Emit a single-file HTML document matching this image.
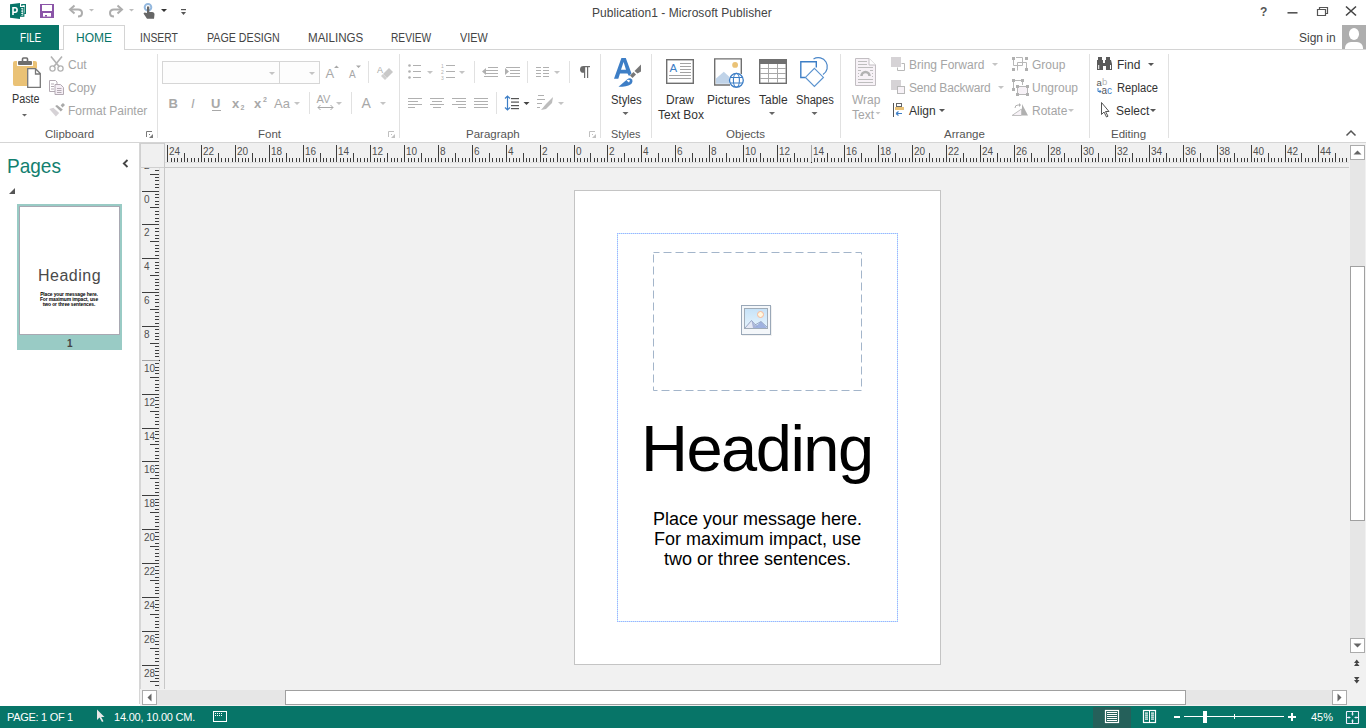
<!DOCTYPE html>
<html><head><meta charset="utf-8">
<style>
*{margin:0;padding:0;box-sizing:border-box}
html,body{width:1366px;height:728px;overflow:hidden;background:#fff;font-family:"Liberation Sans",sans-serif;color:#444}
.a{position:absolute}
.t{position:absolute;white-space:nowrap;line-height:1}
svg{position:absolute;overflow:visible}
.dis{color:#a5a5a5}
.lbl{color:#555;font-size:11.5px}
.tab{position:absolute;top:32px;font-size:12px;color:#444;white-space:nowrap;line-height:12px}
.sep{position:absolute;width:1px;background:#e1e1e1}
.dd{position:absolute;width:0;height:0;border-left:3px solid transparent;border-right:3px solid transparent;border-top:3px solid #777}
.ddg{border-top-color:#c0c0c0}
</style></head><body>
<!-- TITLE BAR -->
<svg style="left:0;top:0" width="200" height="25">
  <!-- publisher logo -->
  <path d="M10 4.3 L20 3 V19 L10 17.7 Z" fill="#077568"/>
  <path d="M21.8 6 V4.6 H25.4 V13.4 H24.2" fill="none" stroke="#077568" stroke-width="1.2"/>
  <rect x="20.6" y="7.6" width="3.2" height="8.6" fill="#fff" stroke="#077568" stroke-width="1.2"/>
  <rect x="20" y="9.2" width="2.6" height="1.3" fill="#077568"/><rect x="20" y="11.7" width="2.6" height="1.2" fill="#077568"/><rect x="20" y="13.9" width="2.6" height="1.2" fill="#077568"/>
  <path d="M13 15 V7.8 H15.2 Q17.1 7.8 17.1 10 Q17.1 12.2 15.2 12.2 H13.8" fill="none" stroke="#fff" stroke-width="1.6"/>
  <!-- save -->
  <rect x="40" y="4" width="14" height="14" fill="#8b55a8"/>
  <rect x="42" y="5" width="10" height="6" fill="#fff"/>
  <rect x="43" y="13" width="8" height="3.6" fill="#fff"/>
  <rect x="45" y="15" width="2" height="1.6" fill="#8b55a8"/>
  <!-- undo -->
  <path d="M71 9.5 H78 Q82 9.5 82 13 Q82 16.5 78 16.5" fill="none" stroke="#adadad" stroke-width="2"/>
  <path d="M74.5 5.5 L70 9.5 L74.5 13.5" fill="none" stroke="#adadad" stroke-width="2"/>
  <path d="M89 9 H94 L91.5 11.5 Z" fill="#bdbdbd"/>
  <!-- redo -->
  <path d="M121 9.5 H114 Q110 9.5 110 13 Q110 16.5 114 16.5" fill="none" stroke="#adadad" stroke-width="2"/>
  <path d="M117.5 5.5 L122 9.5 L117.5 13.5" fill="none" stroke="#adadad" stroke-width="2"/>
  <path d="M129 9 H134 L131.5 11.5 Z" fill="#bdbdbd"/>
  <!-- touch -->
  <circle cx="148" cy="7.3" r="3.3" fill="none" stroke="#94b8de" stroke-width="2"/>
  <path d="M147 6.5 V13 L144.5 12.5 L143.5 13.5 L147 18.8 H154 L154.5 14.5 Q154.5 12 152 12 H149.3 V6.5 Z" fill="#666"/>
  <path d="M161 9 H167 L164 12 Z" fill="#333"/>
  <!-- customize -->
  <rect x="181" y="9" width="5" height="1.2" fill="#555"/>
  <path d="M181 12 H186 L183.5 15 Z" fill="#555"/>
</svg>
<div class="t" style="left:592px;top:7px;font-size:12px;color:#444;letter-spacing:0.05px">Publication1 - Microsoft Publisher</div>
<svg style="left:1250px;top:0" width="116" height="25">
  <text x="10" y="16" font-family="Liberation Sans" font-weight="bold" font-size="12" fill="#555">?</text>
  <rect x="37.5" y="12" width="10" height="1.6" fill="#555"/>
  <path d="M67.5 9.5 H75.5 V15.5 H67.5 Z M69.5 9.5 V7.5 H77.5 V13.5 H75.5" fill="none" stroke="#555" stroke-width="1.2"/>
  <path d="M96 6.5 L106 15.5 M106 6.5 L96 15.5" stroke="#444" stroke-width="1.6"/>
</svg>
<!-- TABS -->
<div class="a" style="left:0;top:25px;width:59px;height:25px;background:#077568;z-index:2"></div>
<div class="tab" style="left:20px;color:#fff;z-index:3;transform:scaleX(0.84);transform-origin:0 0">FILE</div>
<div class="a" style="left:63px;top:25px;width:62px;height:25px;border:1px solid #d4d4d4;border-bottom:none;background:#fff;z-index:2"></div>
<div class="tab" style="left:76px;color:#077568;z-index:3">HOME</div>
<div class="tab" style="left:140px;transform:scaleX(0.865);transform-origin:0 0">INSERT</div>
<div class="tab" style="left:207px;transform:scaleX(0.89);transform-origin:0 0">PAGE DESIGN</div>
<div class="tab" style="left:308px;transform:scaleX(0.965);transform-origin:0 0">MAILINGS</div>
<div class="tab" style="left:391px;transform:scaleX(0.85);transform-origin:0 0">REVIEW</div>
<div class="tab" style="left:460px;transform:scaleX(0.9);transform-origin:0 0">VIEW</div>
<div class="a" style="left:0;top:49px;width:1366px;height:1px;background:#d4d4d4"></div>
<div class="t" style="left:1299px;top:32px;font-size:12px;color:#444">Sign in</div>
<div class="a" style="left:1342px;top:25px;width:24px;height:24px;background:#aeaeae;overflow:hidden">
  <div class="a" style="left:7px;top:3px;width:10px;height:11.5px;border-radius:5px/5.75px;background:#fff"></div>
  <div class="a" style="left:3px;top:16.5px;width:18px;height:10px;border-radius:6px 6px 0 0;background:#fff"></div>
</div>
<!-- RIBBON separators -->
<div class="sep" style="left:157px;top:54px;height:84px"></div>
<div class="sep" style="left:399px;top:54px;height:84px"></div>
<div class="sep" style="left:600px;top:54px;height:84px"></div>
<div class="sep" style="left:651px;top:54px;height:84px"></div>
<div class="sep" style="left:840px;top:54px;height:84px"></div>
<div class="sep" style="left:1089px;top:54px;height:84px"></div>
<div class="sep" style="left:1168px;top:54px;height:84px"></div>
<div class="a" style="left:0;top:142px;width:1366px;height:1px;background:#d5d5d5"></div>
<!-- CLIPBOARD -->
<svg style="left:0;top:50px" width="157" height="92">
  <rect x="13" y="11" width="24" height="25" rx="2" fill="#eac276"/>
  <rect x="17" y="10" width="16" height="6" fill="#fff"/>
  <rect x="18" y="11" width="14" height="4" rx="1" fill="#6d6d6d"/>
  <path d="M22.5 11 V9 Q22.5 8 23.5 8 H26.5 Q27.5 8 27.5 9 V11" fill="none" stroke="#6d6d6d" stroke-width="1.6"/>
  <path d="M27 18 H36 L41 23 V38 H27 Z" fill="#fff"/>
  <path d="M27.7 18.7 H35.5 L40.3 23.5 V37.3 H27.7 Z M35.5 18.7 V24 H40.3" fill="none" stroke="#777" stroke-width="1.3"/>
  <path d="M22 64 H27 L24.5 66.5 Z" fill="#666"/>
  <!-- scissors -->
  <path d="M51 6.5 L59.5 17 M62 6.5 L53.5 17" stroke="#b3b3b3" stroke-width="1.6"/>
  <circle cx="52.5" cy="18.5" r="2.6" fill="none" stroke="#b3b3b3" stroke-width="1.3"/>
  <circle cx="60.5" cy="18.5" r="2.6" fill="none" stroke="#b3b3b3" stroke-width="1.3"/>
  <!-- copy -->
  <path d="M49.5 30.5 H55.5 L57 32 V41.5 H49.5 Z" fill="#fff" stroke="#b3aab3" stroke-width="1"/>
  <path d="M55 34.5 H60.5 L63.5 37.5 V44.5 H55 Z" fill="#f5eef5" stroke="#b3aab3" stroke-width="1"/>
  <path d="M51 34 H54 M51 36.5 H54 M51 39 H54 M57 38.5 H61.5 M57 40.5 H61.5 M57 42.5 H61.5" stroke="#b3aab3" stroke-width="1"/>
  <!-- format painter -->
  <path d="M49.3 59 L53.4 57.7 L59.2 62.9 L55.9 66.5 Z" fill="#d6d2d6"/>
  <path d="M55.1 56 L57 55 L62.8 59.6 L60.8 61.5 Z" fill="#a9a9a9"/>
  <path d="M60.6 55.2 L63 53 L65 55 L62.5 57.4 Z" fill="#a9a9a9"/>
</svg>
<div class="t dis" style="left:68px;top:59px;font-size:12px">Cut</div>
<div class="t dis" style="left:68px;top:82px;font-size:12px">Copy</div>
<div class="t dis" style="left:68px;top:105px;font-size:12px">Format Painter</div>
<div class="t" style="left:12px;top:93px;font-size:12px;color:#333;transform:scaleX(0.9);transform-origin:0 0">Paste</div>
<div class="t lbl" style="left:45px;top:128.7px">Clipboard</div>
<svg style="left:0;top:0" width="1366" height="142"><path d="M146.5 137 V131.5 H152" fill="none" stroke="#7a7a7a" stroke-width="1"/><path d="M149 138 H153 V134 Z" fill="#7a7a7a"/><rect x="149" y="134" width="1" height="1" fill="#7a7a7a"/><path d="M388.5 137 V131.5 H394" fill="none" stroke="#c0c0c0" stroke-width="1"/><path d="M391 138 H395 V134 Z" fill="#c0c0c0"/><rect x="391" y="134" width="1" height="1" fill="#c0c0c0"/><path d="M589.5 137 V131.5 H595" fill="none" stroke="#c0c0c0" stroke-width="1"/><path d="M592 138 H596 V134 Z" fill="#c0c0c0"/><rect x="592" y="134" width="1" height="1" fill="#c0c0c0"/></svg>
<!-- FONT GROUP -->
<div class="a" style="left:162px;top:61px;width:158px;height:23px;border:1px solid #d6d6d6;background:#fdfdfd"></div>
<div class="a" style="left:279px;top:62px;width:1px;height:21px;background:#d6d6d6"></div>
<svg style="left:0;top:0" width="600" height="142">
  <g fill="#c4c4c4">
    <path d="M269 72 H275 L272 75 Z"/><path d="M309 72 H315 L312 75 Z"/>
  </g>
  <g font-family="Liberation Sans" fill="#a8a8a8">
    <text x="325.5" y="78" font-size="13">A</text>
    <text x="349" y="78" font-size="10">A</text>
    <text x="168.5" y="108" font-size="13" font-weight="bold">B</text>
    <text x="191" y="108" font-size="13" font-style="italic">I</text>
    <text x="211" y="108" font-size="13" font-weight="bold">U</text>
    <text x="232" y="108" font-size="13" font-weight="bold">x</text>
    <text x="240.5" y="110" font-size="7" font-weight="bold">2</text>
    <text x="254" y="108" font-size="13" font-weight="bold">x</text>
    <text x="263" y="102" font-size="7" font-weight="bold">2</text>
    <text x="274" y="108" font-size="13">Aa</text>
    <text x="361.5" y="108" font-size="14">A</text>
    <text x="316.5" y="103" font-size="11">AV</text>
    <text x="377" y="73" font-size="9">A</text>
  </g>
  <rect x="212" y="110" width="9" height="1" fill="#a8a8a8"/>
  <path d="M334 68 H339 L336.5 65.5 Z M356 65.5 H361 L358.5 68 Z" fill="#a8a8a8"/>
  <path d="M318 107.5 H333 M318 107.5 L320.5 105 M318 107.5 L320.5 110 M333 107.5 L330.5 105 M333 107.5 L330.5 110" stroke="#a8a8a8" stroke-width="1" fill="none"/>
  <path d="M383 74 L389 68 L393 72 L387 78 Z" fill="#c8c8c8"/>
  <path d="M381 76 L383 74 L387 78 L385 80 Z" fill="#d0d0d0"/>
  <g fill="#c4c4c4">
    <path d="M294 102 H300 L297 105 Z"/><path d="M336 102 H342 L339 105 Z"/><path d="M380 102 H386 L383 105 Z"/>
  </g>
  <rect x="368" y="61" width="1" height="22" fill="#e1e1e1"/>
  <rect x="309" y="92" width="1" height="22" fill="#e1e1e1"/>
  <rect x="351" y="92" width="1" height="22" fill="#e1e1e1"/>
</svg>
<div class="t lbl" style="left:258px;top:128.7px">Font</div>
<!-- PARAGRAPH GROUP -->
<svg style="left:0;top:0" width="600" height="142">
  <g fill="#b0b0b0">
    <!-- bullets -->
    <circle cx="409.5" cy="65.5" r="1.3"/><circle cx="409.5" cy="71.5" r="1.3"/><circle cx="409.5" cy="77.5" r="1.3"/>
    <rect x="413" y="65" width="8" height="1"/><rect x="413" y="71" width="8" height="1"/><rect x="413" y="77" width="8" height="1"/>
    <path d="M427 71 H433 L430 74 Z" fill="#c4c4c4"/>
    <!-- numbering -->
    <rect x="446" y="65" width="9" height="1"/><rect x="446" y="71" width="9" height="1"/><rect x="446" y="77" width="9" height="1"/>
    <path d="M459 71 H465 L462 74 Z" fill="#c4c4c4"/>
    <!-- decrease indent -->
    <rect x="488" y="67" width="10" height="1"/><rect x="486" y="70" width="12" height="1"/><rect x="486" y="73" width="12" height="1"/><rect x="484" y="76" width="14" height="1"/>
    <path d="M482 71.5 L486 68 V75 Z"/>
    <!-- increase indent -->
    <rect x="506" y="67" width="14" height="1"/><rect x="510" y="70" width="10" height="1"/><rect x="510" y="73" width="10" height="1"/><rect x="506" y="76" width="14" height="1"/>
    <path d="M509 71.5 L505 68 V75 Z"/>
    <!-- columns -->
    <rect x="536" y="67" width="5" height="1"/><rect x="543" y="67" width="6" height="1"/>
    <rect x="536" y="70" width="5" height="1"/><rect x="543" y="70" width="6" height="1"/>
    <rect x="536" y="73" width="5" height="1"/><rect x="543" y="73" width="6" height="1"/>
    <rect x="536" y="76" width="5" height="1"/><rect x="543" y="76" width="6" height="1"/>
    <path d="M554 71 H560 L557 74 Z" fill="#c4c4c4"/>
    <!-- align left/center/right/justify -->
    <rect x="408" y="98" width="14" height="1"/><rect x="408" y="101" width="10" height="1"/><rect x="408" y="104" width="14" height="1"/><rect x="408" y="107" width="7" height="1"/>
    <rect x="430" y="98" width="14" height="1"/><rect x="432" y="101" width="10" height="1"/><rect x="430" y="104" width="14" height="1"/><rect x="433" y="107" width="8" height="1"/>
    <rect x="452" y="98" width="14" height="1"/><rect x="456" y="101" width="10" height="1"/><rect x="452" y="104" width="14" height="1"/><rect x="458" y="107" width="8" height="1"/>
    <rect x="474" y="98" width="14" height="1"/><rect x="474" y="101" width="14" height="1"/><rect x="474" y="104" width="14" height="1"/><rect x="474" y="107" width="14" height="1"/>
    <!-- shading -->
    <rect x="538" y="95" width="6" height="1"/><rect x="537" y="99" width="8" height="1"/><rect x="537" y="103" width="5" height="1"/><rect x="537" y="107" width="3" height="1"/>
    <path d="M541 110 L546 104 L553 97 L552 103 L546 109 Z" fill="#bcbcbc"/>
    <path d="M558 102 H564 L561 105 Z" fill="#c4c4c4"/>
  </g>
  <g font-family="Liberation Sans" font-size="5" fill="#b0b0b0"><text x="441" y="68">1</text><text x="441" y="74">2</text><text x="441" y="80">3</text></g>
  <!-- pilcrow -->
  <path d="M585 66 V72.8 H583.5 Q580 72.8 580 69.4 Q580 66 583.5 66 Z" fill="#6b6b6b"/><rect x="584" y="66" width="1.2" height="12" fill="#6b6b6b"/><rect x="587" y="66" width="1.2" height="12" fill="#6b6b6b"/><rect x="584" y="66" width="6" height="1.2" fill="#6b6b6b"/>
  <!-- line spacing -->
  <path d="M507.5 96 V110 M505 98.5 L507.5 96 L510 98.5 M505 107.5 L507.5 110 L510 107.5" stroke="#3d7ec6" stroke-width="1.2" fill="none"/>
  <g fill="#555"><rect x="511" y="98" width="8" height="1.2"/><rect x="511" y="101.5" width="8" height="1.2"/><rect x="511" y="105" width="8" height="1.2"/><rect x="511" y="108" width="8" height="1.2"/></g>
  <path d="M523.5 102 H529.5 L526.5 105 Z" fill="#444"/>
  <g fill="#e1e1e1">
    <rect x="474" y="61" width="1" height="22"/><rect x="527" y="61" width="1" height="22"/><rect x="569" y="61" width="1" height="22"/>
    <rect x="496" y="92" width="1" height="22"/>
  </g>
</svg>
<div class="t lbl" style="left:466px;top:128.7px">Paragraph</div>
<!-- STYLES + OBJECTS -->
<svg style="left:0;top:0" width="1366" height="142">
  <!-- styles icon -->
  <path d="M614 78.8 L621.4 58 H625.8 L631.5 73.5 L629 76 L627.5 73.5 H620 L618.3 78.8 Z M621 69.8 H626 L623.6 62 Z" fill="#3d7ec6" fill-rule="evenodd"/>
  <path d="M630 75.5 L633.5 72 L636 74.5 L632.5 78 Z" fill="#777"/>
  <path d="M634.5 71 L641 64.5 V71.5 L637.5 73.5 Z" fill="#777"/>
  <path d="M618.5 86.8 L627 79.5 Q630 77 632 79.5 Q633.5 82 630.5 84.5 Q627 86.8 618.5 86.8 Z" fill="#3d7ec6"/>
  <path d="M626.5 80.5 Q628.5 79 630 80.5 L629 82.5 Z" fill="#fff"/>
  <path d="M622.5 112 H628.5 L625.5 115 Z" fill="#666"/>
  <!-- draw text box -->
  <rect x="666.7" y="59.7" width="26.6" height="23.6" fill="#fff" stroke="#6f6f6f" stroke-width="1.4"/>
  <text x="669.5" y="72" font-family="Liberation Sans" font-size="11.5" fill="#3d7ec6">A</text>
  <g fill="#a3a3a3"><rect x="680" y="63" width="11" height="1"/><rect x="680" y="66" width="11" height="1"/><rect x="680" y="69" width="11" height="1"/><rect x="680" y="72" width="11" height="1"/><rect x="669" y="75" width="22" height="1"/><rect x="669" y="78" width="22" height="1"/></g>
  <!-- pictures -->
  <path d="M730 85 H714.7 V58.9 H741.3 V74" fill="none" stroke="#6f6f6f" stroke-width="1.4"/>
  <circle cx="735.1" cy="64.9" r="2.9" fill="#eac276"/>
  <path d="M716 83.8 V78.5 L723.8 71.8 L729 76.5 V83.8 Z" fill="#c0d3e8"/>
  <circle cx="736.4" cy="80.3" r="6.9" fill="#fff" stroke="#3d7ec6" stroke-width="1.3"/>
  <ellipse cx="736.4" cy="80.3" rx="3" ry="6.9" fill="none" stroke="#3d7ec6" stroke-width="1.1"/>
  <path d="M730 77.5 H743 M730 83 H743" stroke="#3d7ec6" stroke-width="1.1"/>
  <!-- table -->
  <rect x="759.7" y="59.7" width="26.6" height="23.6" fill="#fff" stroke="#6f6f6f" stroke-width="1.4"/>
  <rect x="759" y="59" width="28" height="5" fill="#707070"/>
  <g fill="#a8a8a8"><rect x="768" y="64" width="1" height="19"/><rect x="777" y="64" width="1" height="19"/><rect x="760" y="68" width="26" height="1"/><rect x="760" y="73" width="26" height="1"/><rect x="760" y="78" width="26" height="1"/></g>
  <path d="M769 112 H775 L772 115 Z" fill="#666"/>
  <!-- shapes -->
  <path d="M805 77.5 H800.8 V61.8 H816.3 V67.5" fill="none" stroke="#3d7ec6" stroke-width="1.4"/>
  <path d="M813.5 59 A8.5 8.5 0 0 1 823 74.5" fill="none" stroke="#4a86c8" stroke-width="1.2"/>
  <path d="M814.4 68.3 L823.4 77.4 L814.4 86.5 L805.4 77.4 Z" fill="#fff" stroke="#5b93cf" stroke-width="1.2"/>
  <path d="M811.5 112 H817.5 L814.5 115 Z" fill="#666"/>
</svg>
<div class="t" style="left:611px;top:94px;font-size:12px;color:#333;transform:scaleX(0.94);transform-origin:0 0">Styles</div>
<div class="t lbl" style="left:611px;top:128.7px;transform:scaleX(0.94);transform-origin:0 0">Styles</div>
<div class="t" style="left:666px;top:94px;font-size:12px;color:#333">Draw</div>
<div class="t" style="left:658px;top:109px;font-size:12px;color:#333">Text Box</div>
<div class="t" style="left:707px;top:94px;font-size:12px;color:#333">Pictures</div>
<div class="t" style="left:759px;top:94px;font-size:12px;color:#333">Table</div>
<div class="t" style="left:796px;top:94px;font-size:12px;color:#333;transform:scaleX(0.93);transform-origin:0 0">Shapes</div>
<div class="t lbl" style="left:726px;top:128.7px">Objects</div>
<!-- ARRANGE + EDITING -->
<svg style="left:0;top:0" width="1366" height="142">
  <!-- wrap text -->
  <path d="M855.5 58.5 H869 L875.5 65 V85.5 H855.5 Z" fill="#f7f2f7" stroke="#c2bec2" stroke-width="1"/>
  <path d="M869 58.5 V65 H875.5" fill="#fff" stroke="#c2bec2" stroke-width="1"/>
  <g fill="#bdbdbd"><rect x="858" y="61" width="9" height="1"/><rect x="858" y="64" width="9" height="1"/><rect x="858" y="67" width="15" height="1"/><rect x="858" y="70" width="3" height="1"/><rect x="870" y="70" width="3" height="1"/><rect x="858" y="73" width="1" height="1"/><rect x="872" y="73" width="1" height="1"/><rect x="858" y="76" width="1" height="1"/><rect x="872" y="76" width="1" height="1"/><rect x="858" y="79" width="15" height="1"/><rect x="858" y="82" width="15" height="1"/></g>
  <path d="M861.5 76 A4 4 0 0 1 869.5 76" fill="none" stroke="#b3b3b3" stroke-width="2.6"/>
  <path d="M875.5 112 H880.5 L878 114.5 Z" fill="#c4c4c4"/>
  <!-- bring forward -->
  <rect x="891" y="57" width="10" height="10" fill="#d6d3d6"/>
  <path d="M901.5 63.5 H904.5 V70.5 H897.5 V67.5" fill="none" stroke="#b8b8b8" stroke-width="1"/>
  <path d="M992 63 H998 L995 66 Z" fill="#c4c4c4"/>
  <!-- send backward -->
  <rect x="891" y="80" width="10" height="10" fill="#d6d3d6"/>
  <rect x="897.5" y="86.5" width="7" height="7" fill="#f7f2f7" stroke="#b8b8b8" stroke-width="1"/>
  <path d="M998 86 H1004 L1001 89 Z" fill="#c4c4c4"/>
  <!-- align -->
  <rect x="893" y="103" width="1" height="14" fill="#555"/>
  <rect x="896.5" y="103.5" width="5" height="3" fill="none" stroke="#666" stroke-width="1"/>
  <rect x="895" y="107" width="9" height="3" fill="#eac276"/>
  <path d="M896 113.5 H902 M896 113.5 L898.5 111.5 M896 113.5 L898.5 115.5" fill="none" stroke="#3d7ec6" stroke-width="1.1"/>
  <path d="M939 109 H945 L942 112 Z" fill="#555"/>
  <!-- group -->
  <g fill="#b0b0b0"><rect x="1012" y="57" width="3" height="3"/><rect x="1025" y="57" width="3" height="3"/><rect x="1012" y="68" width="3" height="3"/><rect x="1025" y="68" width="3" height="3"/></g>
  <path d="M1013.5 60 V65.5 H1022.5 V57.5 H1016 M1017.5 70.5 V62.5 H1026.5 V68" fill="none" stroke="#b8b8b8" stroke-width="1"/>
  <!-- ungroup -->
  <rect x="1017" y="86" width="10" height="8" fill="#f7f2f7"/>
  <g fill="#b0b0b0"><rect x="1012" y="79" width="3" height="3"/><rect x="1021" y="79" width="3" height="3"/><rect x="1012" y="88" width="3" height="3"/><rect x="1016" y="85" width="3" height="3"/><rect x="1026" y="85" width="3" height="3"/><rect x="1016" y="93" width="3" height="3"/><rect x="1026" y="93" width="3" height="3"/></g>
  <path d="M1015 80.5 H1021 M1013.5 82 V88 M1017.5 88 V93 M1027.5 88 V93 M1019 86.5 H1026 M1019 94.5 H1026 M1022.5 82 V85" fill="none" stroke="#b8b8b8" stroke-width="1"/>
  <!-- rotate -->
  <path d="M1012 115.5 L1021.5 109 V115.5 Z" fill="#f7f2f7" stroke="#c0c0c0" stroke-width="1"/>
  <path d="M1022 104 L1028 115.5 H1022 Z" fill="#b0b0b0"/>
  <path d="M1015 108 Q1015 105 1018 105 H1020" fill="none" stroke="#b0b0b0" stroke-width="1"/>
  <path d="M1019 103 L1021 105 L1019 107 Z" fill="#b0b0b0"/>
  <path d="M1068 109 H1074 L1071 112 Z" fill="#c4c4c4"/>
  <!-- find binoculars -->
  <g fill="#5a5a5a"><rect x="1098" y="57" width="4" height="3"/><rect x="1106" y="57" width="4" height="3"/><path d="M1097 60 H1103 V63 H1105 V60 H1111 L1112 64 V70 H1106 V66 H1103 V70 H1097 V64 Z"/></g>
  <g fill="#fff"><rect x="1098.2" y="65" width="1" height="4"/><rect x="1110" y="65" width="1" height="4"/></g>
  <path d="M1148 63 H1154 L1151 66 Z" fill="#555"/>
  <!-- replace -->
  <text x="1096.5" y="86" font-family="Liberation Sans" font-size="9.5" fill="#555">a</text>
  <text x="1102" y="85" font-family="Liberation Sans" font-size="9.5" fill="#b5b5b5">b</text>
  <text x="1101.5" y="93.5" font-family="Liberation Sans" font-size="10" fill="#555">a</text>
  <text x="1107" y="93.5" font-family="Liberation Sans" font-size="10" fill="#3d7ec6">c</text>
  <path d="M1098 88 V91.5 H1101 M1099.5 90 L1101 91.5 L1099.5 93" fill="none" stroke="#3d7ec6" stroke-width="1"/>
  <!-- select cursor -->
  <path d="M1101.5 102.5 V114.5 L1104 112 L1106.5 117 L1108 116.2 L1105.5 111.5 H1109 Z" fill="#fff" stroke="#555" stroke-width="1" stroke-linejoin="round"/>
  <path d="M1150 109 H1156 L1153 112 Z" fill="#555"/>
</svg>
<div class="t dis" style="left:852px;top:94px;font-size:12px">Wrap</div>
<div class="t dis" style="left:852px;top:109px;font-size:12px">Text</div>
<div class="t dis" style="left:909px;top:59px;font-size:12px">Bring Forward</div>
<div class="t dis" style="left:909px;top:82px;font-size:12px;letter-spacing:-0.2px">Send Backward</div>
<div class="t" style="left:909px;top:105px;font-size:12px;color:#333">Align</div>
<div class="t dis" style="left:1032px;top:59px;font-size:12px">Group</div>
<div class="t dis" style="left:1032px;top:82px;font-size:12px">Ungroup</div>
<div class="t dis" style="left:1032px;top:105px;font-size:12px">Rotate</div>
<div class="t lbl" style="left:944px;top:128.7px">Arrange</div>
<div class="t" style="left:1117px;top:59px;font-size:12px;color:#333">Find</div>
<div class="t" style="left:1117px;top:82px;font-size:12px;color:#333;transform:scaleX(0.93);transform-origin:0 0">Replace</div>
<div class="t" style="left:1116px;top:105px;font-size:12px;color:#333">Select</div>
<div class="t lbl" style="left:1111px;top:128.7px">Editing</div>
<svg style="left:1345px;top:128px" width="12" height="10"><path d="M1.5 7.5 L6 3 L10.5 7.5" fill="none" stroke="#555" stroke-width="1.5"/></svg>
<!-- PAGES PANE -->
<div class="a" style="left:139px;top:143px;width:1px;height:561px;background:#d6d6d6"></div>
<div class="t" style="left:7px;top:155px;font-size:21px;color:#12806f;transform:scaleX(0.905);transform-origin:0 0">Pages</div>
<svg style="left:0;top:143px" width="139" height="220">
  <path d="M127.5 17 L123.8 20.5 L127.5 24" fill="none" stroke="#444" stroke-width="1.8"/>
  <path d="M15 45 V51 H9 Z" fill="#555"/>
</svg>
<div class="a" style="left:17px;top:204px;width:105px;height:146px;background:#99cbc5"></div>
<div class="a" style="left:19px;top:206px;width:101px;height:129px;background:#fff;border:1px solid #a8a8b2"></div>
<div class="t" style="left:67px;top:339px;font-size:10px;font-weight:bold;color:#444">1</div>
<div class="t" style="left:38px;top:268px;font-size:16px;color:#4a4a4a;letter-spacing:0.5px">Heading</div>
<div class="t" style="left:39px;top:291.5px;width:60px;text-align:center;font-size:4.9px;line-height:5.2px;color:#000;font-weight:bold;letter-spacing:-0.1px">Place your message here.<br>For maximum impact, use<br>two or three sentences.</div>
<!-- RULERS -->
<div class="a" style="left:140px;top:143px;width:1210px;height:25px;background:#f0f0f0"></div>
<div class="a" style="left:140px;top:143px;width:25px;height:546px;background:#f0f0f0"></div>
<div class="a" style="left:140px;top:143px;width:25px;height:25px;border:1px solid #d0d0d0;border-right-color:#c8c8c8;background:#f0f0f0"></div>
<div class="a" style="left:165px;top:167px;width:1184px;height:1px;background:#c8c8c8"></div>
<div class="a" style="left:164px;top:167px;width:1px;height:522px;background:#c8c8c8"></div>
<div class="a" style="left:140px;top:167px;width:1px;height:522px;background:#d6d6d6"></div>
<!-- WORKSPACE -->
<div class="a" style="left:165px;top:168px;width:1185px;height:522px;background:#f1f1f1"></div>
<div class="a" style="left:140px;top:689px;width:1226px;height:17px;background:#f1f1f1"></div>
<div class="a" style="left:1349px;top:143px;width:17px;height:563px;background:#f1f1f1"></div>
<div class="a" style="left:165px;top:162px;width:1184px;height:1px;background:#e2e2e2"></div>
<div class="a" style="left:159px;top:168px;width:1px;height:521px;background:#e2e2e2"></div>
<!-- PAGE -->
<div class="a" style="left:574px;top:190px;width:367px;height:475px;background:#fff;border:1px solid #c4c4c4"></div>
<div class="a" style="left:617px;top:233px;width:281px;height:1px;background:repeating-linear-gradient(90deg,#ada4ff 0 1px,#b0f4ff 1px 2px)"></div>
<div class="a" style="left:617px;top:621px;width:281px;height:1px;background:repeating-linear-gradient(90deg,#ada4ff 0 1px,#b0f4ff 1px 2px)"></div>
<div class="a" style="left:617px;top:233px;width:1px;height:389px;background:repeating-linear-gradient(180deg,#ada4ff 0 1px,#b0f4ff 1px 2px)"></div>
<div class="a" style="left:897px;top:233px;width:1px;height:389px;background:repeating-linear-gradient(180deg,#ada4ff 0 1px,#b0f4ff 1px 2px)"></div>
<svg style="left:0;top:0" width="1366" height="728">
  <rect x="653.5" y="252.5" width="208" height="138" fill="none" stroke="#a3b5ca" stroke-width="1" stroke-dasharray="8 4" stroke-dashoffset="2"/>
  <!-- picture icon -->
  <rect x="742" y="306" width="30" height="30" fill="#e8e8e8" opacity="0.6"/>
  <rect x="741.5" y="305.5" width="29" height="29" fill="#f4f7fa" stroke="#9aa8b8" stroke-width="1"/>
  <defs><linearGradient id="sky" x1="0" y1="0" x2="0" y2="1"><stop offset="0" stop-color="#c6e2f8"/><stop offset="1" stop-color="#e6f4fd"/></linearGradient></defs>
  <rect x="744.5" y="308.5" width="23" height="20" fill="url(#sky)" stroke="#a0acb8" stroke-width="1"/>
  <circle cx="760.5" cy="314.5" r="3" fill="#fff8e0" stroke="#f8b898" stroke-width="1"/>
  <path d="M745 328 L751.5 320.5 L757 328 Z" fill="#e4e8f4"/>
  <path d="M751.5 320.5 L757 328 H753 Z" fill="#a8b4d8"/>
  <path d="M754 328 L761 321.5 L767 328 Z" fill="#9fb2e0"/>
  <path d="M745 328 L751.5 320.5 L757 326.5 M755 325 L761 321.5 L767 327" fill="none" stroke="#8796b8" stroke-width="0.8"/>
</svg>
<div class="t" style="left:641px;top:416px;font-size:65px;color:#000;letter-spacing:-1.5px">Heading</div>
<div class="t" style="left:600px;top:509px;width:315px;text-align:center;font-size:18px;line-height:20px;color:#000">Place your message here.<br>For maximum impact, use<br>two or three sentences.</div>
<svg style="left:0;top:0" width="1366" height="728"><g fill="#3d3d3d"><rect x="167" y="145" width="1" height="17"/><rect x="171" y="158" width="1" height="4"/><rect x="174" y="158" width="1" height="4"/><rect x="177" y="158" width="1" height="4"/><rect x="181" y="158" width="1" height="4"/><rect x="184" y="153" width="1" height="9"/><rect x="187" y="158" width="1" height="4"/><rect x="191" y="158" width="1" height="4"/><rect x="194" y="158" width="1" height="4"/><rect x="198" y="158" width="1" height="4"/><rect x="201" y="145" width="1" height="17"/><rect x="204" y="158" width="1" height="4"/><rect x="208" y="158" width="1" height="4"/><rect x="211" y="158" width="1" height="4"/><rect x="215" y="158" width="1" height="4"/><rect x="218" y="153" width="1" height="9"/><rect x="221" y="158" width="1" height="4"/><rect x="225" y="158" width="1" height="4"/><rect x="228" y="158" width="1" height="4"/><rect x="232" y="158" width="1" height="4"/><rect x="235" y="145" width="1" height="17"/><rect x="238" y="158" width="1" height="4"/><rect x="242" y="158" width="1" height="4"/><rect x="245" y="158" width="1" height="4"/><rect x="248" y="158" width="1" height="4"/><rect x="252" y="153" width="1" height="9"/><rect x="255" y="158" width="1" height="4"/><rect x="259" y="158" width="1" height="4"/><rect x="262" y="158" width="1" height="4"/><rect x="265" y="158" width="1" height="4"/><rect x="269" y="145" width="1" height="17"/><rect x="272" y="158" width="1" height="4"/><rect x="276" y="158" width="1" height="4"/><rect x="279" y="158" width="1" height="4"/><rect x="282" y="158" width="1" height="4"/><rect x="286" y="153" width="1" height="9"/><rect x="289" y="158" width="1" height="4"/><rect x="292" y="158" width="1" height="4"/><rect x="296" y="158" width="1" height="4"/><rect x="299" y="158" width="1" height="4"/><rect x="303" y="145" width="1" height="17"/><rect x="306" y="158" width="1" height="4"/><rect x="309" y="158" width="1" height="4"/><rect x="313" y="158" width="1" height="4"/><rect x="316" y="158" width="1" height="4"/><rect x="320" y="153" width="1" height="9"/><rect x="323" y="158" width="1" height="4"/><rect x="326" y="158" width="1" height="4"/><rect x="330" y="158" width="1" height="4"/><rect x="333" y="158" width="1" height="4"/><rect x="336" y="145" width="1" height="17"/><rect x="340" y="158" width="1" height="4"/><rect x="343" y="158" width="1" height="4"/><rect x="347" y="158" width="1" height="4"/><rect x="350" y="158" width="1" height="4"/><rect x="353" y="153" width="1" height="9"/><rect x="357" y="158" width="1" height="4"/><rect x="360" y="158" width="1" height="4"/><rect x="364" y="158" width="1" height="4"/><rect x="367" y="158" width="1" height="4"/><rect x="370" y="145" width="1" height="17"/><rect x="374" y="158" width="1" height="4"/><rect x="377" y="158" width="1" height="4"/><rect x="380" y="158" width="1" height="4"/><rect x="384" y="158" width="1" height="4"/><rect x="387" y="153" width="1" height="9"/><rect x="391" y="158" width="1" height="4"/><rect x="394" y="158" width="1" height="4"/><rect x="397" y="158" width="1" height="4"/><rect x="401" y="158" width="1" height="4"/><rect x="404" y="145" width="1" height="17"/><rect x="408" y="158" width="1" height="4"/><rect x="411" y="158" width="1" height="4"/><rect x="414" y="158" width="1" height="4"/><rect x="418" y="158" width="1" height="4"/><rect x="421" y="153" width="1" height="9"/><rect x="425" y="158" width="1" height="4"/><rect x="428" y="158" width="1" height="4"/><rect x="431" y="158" width="1" height="4"/><rect x="435" y="158" width="1" height="4"/><rect x="438" y="145" width="1" height="17"/><rect x="441" y="158" width="1" height="4"/><rect x="445" y="158" width="1" height="4"/><rect x="448" y="158" width="1" height="4"/><rect x="452" y="158" width="1" height="4"/><rect x="455" y="153" width="1" height="9"/><rect x="458" y="158" width="1" height="4"/><rect x="462" y="158" width="1" height="4"/><rect x="465" y="158" width="1" height="4"/><rect x="469" y="158" width="1" height="4"/><rect x="472" y="145" width="1" height="17"/><rect x="475" y="158" width="1" height="4"/><rect x="479" y="158" width="1" height="4"/><rect x="482" y="158" width="1" height="4"/><rect x="485" y="158" width="1" height="4"/><rect x="489" y="153" width="1" height="9"/><rect x="492" y="158" width="1" height="4"/><rect x="496" y="158" width="1" height="4"/><rect x="499" y="158" width="1" height="4"/><rect x="502" y="158" width="1" height="4"/><rect x="506" y="145" width="1" height="17"/><rect x="509" y="158" width="1" height="4"/><rect x="513" y="158" width="1" height="4"/><rect x="516" y="158" width="1" height="4"/><rect x="519" y="158" width="1" height="4"/><rect x="523" y="153" width="1" height="9"/><rect x="526" y="158" width="1" height="4"/><rect x="529" y="158" width="1" height="4"/><rect x="533" y="158" width="1" height="4"/><rect x="536" y="158" width="1" height="4"/><rect x="540" y="145" width="1" height="17"/><rect x="543" y="158" width="1" height="4"/><rect x="546" y="158" width="1" height="4"/><rect x="550" y="158" width="1" height="4"/><rect x="553" y="158" width="1" height="4"/><rect x="557" y="153" width="1" height="9"/><rect x="560" y="158" width="1" height="4"/><rect x="563" y="158" width="1" height="4"/><rect x="567" y="158" width="1" height="4"/><rect x="570" y="158" width="1" height="4"/><rect x="574" y="145" width="1" height="17"/><rect x="577" y="158" width="1" height="4"/><rect x="580" y="158" width="1" height="4"/><rect x="584" y="158" width="1" height="4"/><rect x="587" y="158" width="1" height="4"/><rect x="590" y="153" width="1" height="9"/><rect x="594" y="158" width="1" height="4"/><rect x="597" y="158" width="1" height="4"/><rect x="601" y="158" width="1" height="4"/><rect x="604" y="158" width="1" height="4"/><rect x="607" y="145" width="1" height="17"/><rect x="611" y="158" width="1" height="4"/><rect x="614" y="158" width="1" height="4"/><rect x="618" y="158" width="1" height="4"/><rect x="621" y="158" width="1" height="4"/><rect x="624" y="153" width="1" height="9"/><rect x="628" y="158" width="1" height="4"/><rect x="631" y="158" width="1" height="4"/><rect x="634" y="158" width="1" height="4"/><rect x="638" y="158" width="1" height="4"/><rect x="641" y="145" width="1" height="17"/><rect x="645" y="158" width="1" height="4"/><rect x="648" y="158" width="1" height="4"/><rect x="651" y="158" width="1" height="4"/><rect x="655" y="158" width="1" height="4"/><rect x="658" y="153" width="1" height="9"/><rect x="662" y="158" width="1" height="4"/><rect x="665" y="158" width="1" height="4"/><rect x="668" y="158" width="1" height="4"/><rect x="672" y="158" width="1" height="4"/><rect x="675" y="145" width="1" height="17"/><rect x="678" y="158" width="1" height="4"/><rect x="682" y="158" width="1" height="4"/><rect x="685" y="158" width="1" height="4"/><rect x="689" y="158" width="1" height="4"/><rect x="692" y="153" width="1" height="9"/><rect x="695" y="158" width="1" height="4"/><rect x="699" y="158" width="1" height="4"/><rect x="702" y="158" width="1" height="4"/><rect x="706" y="158" width="1" height="4"/><rect x="709" y="145" width="1" height="17"/><rect x="712" y="158" width="1" height="4"/><rect x="716" y="158" width="1" height="4"/><rect x="719" y="158" width="1" height="4"/><rect x="722" y="158" width="1" height="4"/><rect x="726" y="153" width="1" height="9"/><rect x="729" y="158" width="1" height="4"/><rect x="733" y="158" width="1" height="4"/><rect x="736" y="158" width="1" height="4"/><rect x="739" y="158" width="1" height="4"/><rect x="743" y="145" width="1" height="17"/><rect x="746" y="158" width="1" height="4"/><rect x="750" y="158" width="1" height="4"/><rect x="753" y="158" width="1" height="4"/><rect x="756" y="158" width="1" height="4"/><rect x="760" y="153" width="1" height="9"/><rect x="763" y="158" width="1" height="4"/><rect x="767" y="158" width="1" height="4"/><rect x="770" y="158" width="1" height="4"/><rect x="773" y="158" width="1" height="4"/><rect x="777" y="145" width="1" height="17"/><rect x="780" y="158" width="1" height="4"/><rect x="783" y="158" width="1" height="4"/><rect x="787" y="158" width="1" height="4"/><rect x="790" y="158" width="1" height="4"/><rect x="794" y="153" width="1" height="9"/><rect x="797" y="158" width="1" height="4"/><rect x="800" y="158" width="1" height="4"/><rect x="804" y="158" width="1" height="4"/><rect x="807" y="158" width="1" height="4"/><rect x="811" y="145" width="1" height="17" fill="#a6a6a6"/><rect x="811" y="162" width="1" height="1" fill="#222"/><rect x="814" y="158" width="1" height="4"/><rect x="817" y="158" width="1" height="4"/><rect x="821" y="158" width="1" height="4"/><rect x="824" y="158" width="1" height="4"/><rect x="827" y="153" width="1" height="9"/><rect x="831" y="158" width="1" height="4"/><rect x="834" y="158" width="1" height="4"/><rect x="838" y="158" width="1" height="4"/><rect x="841" y="158" width="1" height="4"/><rect x="844" y="145" width="1" height="17"/><rect x="848" y="158" width="1" height="4"/><rect x="851" y="158" width="1" height="4"/><rect x="855" y="158" width="1" height="4"/><rect x="858" y="158" width="1" height="4"/><rect x="861" y="153" width="1" height="9"/><rect x="865" y="158" width="1" height="4"/><rect x="868" y="158" width="1" height="4"/><rect x="871" y="158" width="1" height="4"/><rect x="875" y="158" width="1" height="4"/><rect x="878" y="145" width="1" height="17"/><rect x="882" y="158" width="1" height="4"/><rect x="885" y="158" width="1" height="4"/><rect x="888" y="158" width="1" height="4"/><rect x="892" y="158" width="1" height="4"/><rect x="895" y="153" width="1" height="9"/><rect x="899" y="158" width="1" height="4"/><rect x="902" y="158" width="1" height="4"/><rect x="905" y="158" width="1" height="4"/><rect x="909" y="158" width="1" height="4"/><rect x="912" y="145" width="1" height="17"/><rect x="915" y="158" width="1" height="4"/><rect x="919" y="158" width="1" height="4"/><rect x="922" y="158" width="1" height="4"/><rect x="926" y="158" width="1" height="4"/><rect x="929" y="153" width="1" height="9"/><rect x="932" y="158" width="1" height="4"/><rect x="936" y="158" width="1" height="4"/><rect x="939" y="158" width="1" height="4"/><rect x="943" y="158" width="1" height="4"/><rect x="946" y="145" width="1" height="17"/><rect x="949" y="158" width="1" height="4"/><rect x="953" y="158" width="1" height="4"/><rect x="956" y="158" width="1" height="4"/><rect x="960" y="158" width="1" height="4"/><rect x="963" y="153" width="1" height="9"/><rect x="966" y="158" width="1" height="4"/><rect x="970" y="158" width="1" height="4"/><rect x="973" y="158" width="1" height="4"/><rect x="976" y="158" width="1" height="4"/><rect x="980" y="145" width="1" height="17"/><rect x="983" y="158" width="1" height="4"/><rect x="987" y="158" width="1" height="4"/><rect x="990" y="158" width="1" height="4"/><rect x="993" y="158" width="1" height="4"/><rect x="997" y="153" width="1" height="9"/><rect x="1000" y="158" width="1" height="4"/><rect x="1004" y="158" width="1" height="4"/><rect x="1007" y="158" width="1" height="4"/><rect x="1010" y="158" width="1" height="4"/><rect x="1014" y="145" width="1" height="17"/><rect x="1017" y="158" width="1" height="4"/><rect x="1020" y="158" width="1" height="4"/><rect x="1024" y="158" width="1" height="4"/><rect x="1027" y="158" width="1" height="4"/><rect x="1031" y="153" width="1" height="9"/><rect x="1034" y="158" width="1" height="4"/><rect x="1037" y="158" width="1" height="4"/><rect x="1041" y="158" width="1" height="4"/><rect x="1044" y="158" width="1" height="4"/><rect x="1048" y="145" width="1" height="17"/><rect x="1051" y="158" width="1" height="4"/><rect x="1054" y="158" width="1" height="4"/><rect x="1058" y="158" width="1" height="4"/><rect x="1061" y="158" width="1" height="4"/><rect x="1064" y="153" width="1" height="9"/><rect x="1068" y="158" width="1" height="4"/><rect x="1071" y="158" width="1" height="4"/><rect x="1075" y="158" width="1" height="4"/><rect x="1078" y="158" width="1" height="4"/><rect x="1081" y="145" width="1" height="17"/><rect x="1085" y="158" width="1" height="4"/><rect x="1088" y="158" width="1" height="4"/><rect x="1092" y="158" width="1" height="4"/><rect x="1095" y="158" width="1" height="4"/><rect x="1098" y="153" width="1" height="9"/><rect x="1102" y="158" width="1" height="4"/><rect x="1105" y="158" width="1" height="4"/><rect x="1108" y="158" width="1" height="4"/><rect x="1112" y="158" width="1" height="4"/><rect x="1115" y="145" width="1" height="17"/><rect x="1119" y="158" width="1" height="4"/><rect x="1122" y="158" width="1" height="4"/><rect x="1125" y="158" width="1" height="4"/><rect x="1129" y="158" width="1" height="4"/><rect x="1132" y="153" width="1" height="9"/><rect x="1136" y="158" width="1" height="4"/><rect x="1139" y="158" width="1" height="4"/><rect x="1142" y="158" width="1" height="4"/><rect x="1146" y="158" width="1" height="4"/><rect x="1149" y="145" width="1" height="17"/><rect x="1153" y="158" width="1" height="4"/><rect x="1156" y="158" width="1" height="4"/><rect x="1159" y="158" width="1" height="4"/><rect x="1163" y="158" width="1" height="4"/><rect x="1166" y="153" width="1" height="9"/><rect x="1169" y="158" width="1" height="4"/><rect x="1173" y="158" width="1" height="4"/><rect x="1176" y="158" width="1" height="4"/><rect x="1180" y="158" width="1" height="4"/><rect x="1183" y="145" width="1" height="17"/><rect x="1186" y="158" width="1" height="4"/><rect x="1190" y="158" width="1" height="4"/><rect x="1193" y="158" width="1" height="4"/><rect x="1197" y="158" width="1" height="4"/><rect x="1200" y="153" width="1" height="9"/><rect x="1203" y="158" width="1" height="4"/><rect x="1207" y="158" width="1" height="4"/><rect x="1210" y="158" width="1" height="4"/><rect x="1213" y="158" width="1" height="4"/><rect x="1217" y="145" width="1" height="17"/><rect x="1220" y="158" width="1" height="4"/><rect x="1224" y="158" width="1" height="4"/><rect x="1227" y="158" width="1" height="4"/><rect x="1230" y="158" width="1" height="4"/><rect x="1234" y="153" width="1" height="9"/><rect x="1237" y="158" width="1" height="4"/><rect x="1241" y="158" width="1" height="4"/><rect x="1244" y="158" width="1" height="4"/><rect x="1247" y="158" width="1" height="4"/><rect x="1251" y="145" width="1" height="17"/><rect x="1254" y="158" width="1" height="4"/><rect x="1257" y="158" width="1" height="4"/><rect x="1261" y="158" width="1" height="4"/><rect x="1264" y="158" width="1" height="4"/><rect x="1268" y="153" width="1" height="9"/><rect x="1271" y="158" width="1" height="4"/><rect x="1274" y="158" width="1" height="4"/><rect x="1278" y="158" width="1" height="4"/><rect x="1281" y="158" width="1" height="4"/><rect x="1285" y="145" width="1" height="17"/><rect x="1288" y="158" width="1" height="4"/><rect x="1291" y="158" width="1" height="4"/><rect x="1295" y="158" width="1" height="4"/><rect x="1298" y="158" width="1" height="4"/><rect x="1301" y="153" width="1" height="9"/><rect x="1305" y="158" width="1" height="4"/><rect x="1308" y="158" width="1" height="4"/><rect x="1312" y="158" width="1" height="4"/><rect x="1315" y="158" width="1" height="4"/><rect x="1318" y="145" width="1" height="17"/><rect x="1322" y="158" width="1" height="4"/><rect x="1325" y="158" width="1" height="4"/><rect x="1329" y="158" width="1" height="4"/><rect x="1332" y="158" width="1" height="4"/><rect x="1335" y="153" width="1" height="9"/><rect x="1339" y="158" width="1" height="4"/><rect x="1342" y="158" width="1" height="4"/><rect x="1346" y="158" width="1" height="4"/></g><g fill="#505050" font-family="Liberation Sans" font-size="10"><text x="169" y="155">24</text><text x="203" y="155">22</text><text x="237" y="155">20</text><text x="271" y="155">18</text><text x="305" y="155">16</text><text x="338" y="155">14</text><text x="372" y="155">12</text><text x="406" y="155">10</text><text x="440" y="155">8</text><text x="474" y="155">6</text><text x="508" y="155">4</text><text x="542" y="155">2</text><text x="576" y="155">0</text><text x="609" y="155">2</text><text x="643" y="155">4</text><text x="677" y="155">6</text><text x="711" y="155">8</text><text x="745" y="155">10</text><text x="779" y="155">12</text><text x="813" y="155">14</text><text x="846" y="155">16</text><text x="880" y="155">18</text><text x="914" y="155">20</text><text x="948" y="155">22</text><text x="982" y="155">24</text><text x="1016" y="155">26</text><text x="1050" y="155">28</text><text x="1083" y="155">30</text><text x="1117" y="155">32</text><text x="1151" y="155">34</text><text x="1185" y="155">36</text><text x="1219" y="155">38</text><text x="1253" y="155">40</text><text x="1287" y="155">42</text><text x="1320" y="155">44</text></g><g fill="#3d3d3d"><rect x="155" y="170" width="4" height="1"/><rect x="150" y="174" width="9" height="1"/><rect x="155" y="177" width="4" height="1"/><rect x="155" y="180" width="4" height="1"/><rect x="155" y="184" width="4" height="1"/><rect x="155" y="187" width="4" height="1"/><rect x="142" y="191" width="17" height="1"/><rect x="155" y="194" width="4" height="1"/><rect x="155" y="197" width="4" height="1"/><rect x="155" y="201" width="4" height="1"/><rect x="155" y="204" width="4" height="1"/><rect x="150" y="207" width="9" height="1"/><rect x="155" y="211" width="4" height="1"/><rect x="155" y="214" width="4" height="1"/><rect x="155" y="218" width="4" height="1"/><rect x="155" y="221" width="4" height="1"/><rect x="142" y="224" width="17" height="1"/><rect x="155" y="228" width="4" height="1"/><rect x="155" y="231" width="4" height="1"/><rect x="155" y="235" width="4" height="1"/><rect x="155" y="238" width="4" height="1"/><rect x="150" y="241" width="9" height="1"/><rect x="155" y="245" width="4" height="1"/><rect x="155" y="248" width="4" height="1"/><rect x="155" y="251" width="4" height="1"/><rect x="155" y="255" width="4" height="1"/><rect x="142" y="258" width="17" height="1"/><rect x="155" y="262" width="4" height="1"/><rect x="155" y="265" width="4" height="1"/><rect x="155" y="268" width="4" height="1"/><rect x="155" y="272" width="4" height="1"/><rect x="150" y="275" width="9" height="1"/><rect x="155" y="279" width="4" height="1"/><rect x="155" y="282" width="4" height="1"/><rect x="155" y="285" width="4" height="1"/><rect x="155" y="289" width="4" height="1"/><rect x="142" y="292" width="17" height="1"/><rect x="155" y="295" width="4" height="1"/><rect x="155" y="299" width="4" height="1"/><rect x="155" y="302" width="4" height="1"/><rect x="155" y="306" width="4" height="1"/><rect x="150" y="309" width="9" height="1"/><rect x="155" y="312" width="4" height="1"/><rect x="155" y="316" width="4" height="1"/><rect x="155" y="319" width="4" height="1"/><rect x="155" y="323" width="4" height="1"/><rect x="142" y="326" width="17" height="1"/><rect x="155" y="329" width="4" height="1"/><rect x="155" y="333" width="4" height="1"/><rect x="155" y="336" width="4" height="1"/><rect x="155" y="339" width="4" height="1"/><rect x="150" y="343" width="9" height="1"/><rect x="155" y="346" width="4" height="1"/><rect x="155" y="350" width="4" height="1"/><rect x="155" y="353" width="4" height="1"/><rect x="155" y="356" width="4" height="1"/><rect x="142" y="360" width="17" height="1" fill="#a6a6a6"/><rect x="159" y="360" width="1" height="1" fill="#222"/><rect x="155" y="363" width="4" height="1"/><rect x="155" y="367" width="4" height="1"/><rect x="155" y="370" width="4" height="1"/><rect x="155" y="373" width="4" height="1"/><rect x="150" y="377" width="9" height="1"/><rect x="155" y="380" width="4" height="1"/><rect x="155" y="384" width="4" height="1"/><rect x="155" y="387" width="4" height="1"/><rect x="155" y="390" width="4" height="1"/><rect x="142" y="394" width="17" height="1"/><rect x="155" y="397" width="4" height="1"/><rect x="155" y="400" width="4" height="1"/><rect x="155" y="404" width="4" height="1"/><rect x="155" y="407" width="4" height="1"/><rect x="150" y="411" width="9" height="1"/><rect x="155" y="414" width="4" height="1"/><rect x="155" y="417" width="4" height="1"/><rect x="155" y="421" width="4" height="1"/><rect x="155" y="424" width="4" height="1"/><rect x="142" y="428" width="17" height="1"/><rect x="155" y="431" width="4" height="1"/><rect x="155" y="434" width="4" height="1"/><rect x="155" y="438" width="4" height="1"/><rect x="155" y="441" width="4" height="1"/><rect x="150" y="444" width="9" height="1"/><rect x="155" y="448" width="4" height="1"/><rect x="155" y="451" width="4" height="1"/><rect x="155" y="455" width="4" height="1"/><rect x="155" y="458" width="4" height="1"/><rect x="142" y="461" width="17" height="1"/><rect x="155" y="465" width="4" height="1"/><rect x="155" y="468" width="4" height="1"/><rect x="155" y="472" width="4" height="1"/><rect x="155" y="475" width="4" height="1"/><rect x="150" y="478" width="9" height="1"/><rect x="155" y="482" width="4" height="1"/><rect x="155" y="485" width="4" height="1"/><rect x="155" y="488" width="4" height="1"/><rect x="155" y="492" width="4" height="1"/><rect x="142" y="495" width="17" height="1"/><rect x="155" y="499" width="4" height="1"/><rect x="155" y="502" width="4" height="1"/><rect x="155" y="505" width="4" height="1"/><rect x="155" y="509" width="4" height="1"/><rect x="150" y="512" width="9" height="1"/><rect x="155" y="516" width="4" height="1"/><rect x="155" y="519" width="4" height="1"/><rect x="155" y="522" width="4" height="1"/><rect x="155" y="526" width="4" height="1"/><rect x="142" y="529" width="17" height="1"/><rect x="155" y="532" width="4" height="1"/><rect x="155" y="536" width="4" height="1"/><rect x="155" y="539" width="4" height="1"/><rect x="155" y="543" width="4" height="1"/><rect x="150" y="546" width="9" height="1"/><rect x="155" y="549" width="4" height="1"/><rect x="155" y="553" width="4" height="1"/><rect x="155" y="556" width="4" height="1"/><rect x="155" y="560" width="4" height="1"/><rect x="142" y="563" width="17" height="1"/><rect x="155" y="566" width="4" height="1"/><rect x="155" y="570" width="4" height="1"/><rect x="155" y="573" width="4" height="1"/><rect x="155" y="577" width="4" height="1"/><rect x="150" y="580" width="9" height="1"/><rect x="155" y="583" width="4" height="1"/><rect x="155" y="587" width="4" height="1"/><rect x="155" y="590" width="4" height="1"/><rect x="155" y="593" width="4" height="1"/><rect x="142" y="597" width="17" height="1"/><rect x="155" y="600" width="4" height="1"/><rect x="155" y="604" width="4" height="1"/><rect x="155" y="607" width="4" height="1"/><rect x="155" y="610" width="4" height="1"/><rect x="150" y="614" width="9" height="1"/><rect x="155" y="617" width="4" height="1"/><rect x="155" y="621" width="4" height="1"/><rect x="155" y="624" width="4" height="1"/><rect x="155" y="627" width="4" height="1"/><rect x="142" y="631" width="17" height="1"/><rect x="155" y="634" width="4" height="1"/><rect x="155" y="637" width="4" height="1"/><rect x="155" y="641" width="4" height="1"/><rect x="155" y="644" width="4" height="1"/><rect x="150" y="648" width="9" height="1"/><rect x="155" y="651" width="4" height="1"/><rect x="155" y="654" width="4" height="1"/><rect x="155" y="658" width="4" height="1"/><rect x="155" y="661" width="4" height="1"/><rect x="142" y="665" width="17" height="1"/><rect x="155" y="668" width="4" height="1"/><rect x="155" y="671" width="4" height="1"/><rect x="155" y="675" width="4" height="1"/><rect x="155" y="678" width="4" height="1"/><rect x="150" y="681" width="9" height="1"/><rect x="155" y="685" width="4" height="1"/></g><clipPath id="vclip"><rect x="140" y="168" width="25" height="521"/></clipPath><g clip-path="url(#vclip)" fill="#505050" font-family="Liberation Sans" font-size="10"><text x="144" y="169">2</text><text x="144" y="203">0</text><text x="144" y="236">2</text><text x="144" y="270">4</text><text x="144" y="304">6</text><text x="144" y="338">8</text><text x="144" y="372">10</text><text x="144" y="406">12</text><text x="144" y="440">14</text><text x="144" y="473">16</text><text x="144" y="507">18</text><text x="144" y="541">20</text><text x="144" y="575">22</text><text x="144" y="609">24</text><text x="144" y="643">26</text><text x="144" y="677">28</text></g></svg><!-- SCROLLBARS -->
<div class="a" style="left:1350px;top:160px;width:15px;height:478px;background:#e6e6e6"></div>
<div class="a" style="left:1350px;top:145px;width:15px;height:15px;background:#fff;border:1px solid #ababab"></div>
<div class="a" style="left:1350px;top:266px;width:15px;height:255px;background:#fff;border:1px solid #a0a0a0"></div>
<div class="a" style="left:1350px;top:638px;width:15px;height:15px;background:#fff;border:1px solid #ababab"></div>
<div class="a" style="left:157px;top:690px;width:1175px;height:15px;background:#e6e6e6"></div>
<div class="a" style="left:142px;top:690px;width:15px;height:15px;background:#fff;border:1px solid #ababab"></div>
<div class="a" style="left:285px;top:690px;width:901px;height:15px;background:#fff;border:1px solid #a0a0a0"></div>
<div class="a" style="left:1332px;top:690px;width:15px;height:15px;background:#fff;border:1px solid #ababab"></div>
<svg style="left:0;top:0" width="1366" height="728">
  <g fill="#666">
    <path d="M1353.5 154.5 H1361.5 L1357.5 150.5 Z"/>
    <path d="M1353.5 643.5 H1361.5 L1357.5 647.5 Z"/>
    <path d="M1354 663 H1359.5 L1356.75 659.5 Z M1354 666 H1359.5 L1356.75 662.5 Z" fill="#444"/>
    <path d="M1354 677 H1359.5 L1356.75 680.5 Z M1354 680 H1359.5 L1356.75 683.5 Z" fill="#444"/>
    <path d="M151.5 693.5 V701.5 L147.5 697.5 Z"/>
    <path d="M1337.5 693.5 V701.5 L1341.5 697.5 Z"/>
  </g>
</svg>
<!-- STATUS BAR -->
<div class="a" style="left:0;top:706px;width:1366px;height:22px;background:#077568"></div>
<div class="a" style="left:1093px;top:707px;width:38px;height:21px;background:#25605a"></div>
<div class="t" style="left:7px;top:712px;font-size:11px;color:#fff;letter-spacing:-0.3px">PAGE: 1 OF 1</div>
<div class="t" style="left:114px;top:712px;font-size:11px;color:#fff;letter-spacing:-0.2px">14.00, 10.00 CM.</div>
<div class="t" style="left:1311px;top:712px;font-size:11px;color:#fff">45%</div>
<svg style="left:0;top:706px" width="1366" height="22">
  <path d="M97 3.5 V14 L99.5 11.5 L102 16 L103.5 15.2 L101.2 11 H104.5 Z" fill="#e8e8e8"/>
  <rect x="213.5" y="5.5" width="13" height="10" fill="none" stroke="#fff" stroke-width="1"/>
  <path d="M215 7.5 H223 M215 9.5 H223" stroke="#fff" stroke-width="1" stroke-dasharray="1 1"/>
  <rect x="1105.5" y="4.5" width="13" height="12" fill="none" stroke="#fff" stroke-width="1.2"/>
  <g fill="#fff"><rect x="1107" y="6" width="10" height="1"/><rect x="1107" y="8" width="10" height="1"/><rect x="1107" y="10" width="10" height="1"/><rect x="1107" y="12" width="10" height="1"/><rect x="1107" y="14" width="10" height="1"/></g>
  <rect x="1143.5" y="4.5" width="12" height="12" fill="none" stroke="#fff" stroke-width="1.2"/>
  <rect x="1149" y="5" width="1" height="11" fill="#fff"/>
  <g fill="#fff"><rect x="1145" y="6.5" width="3" height="1.2"/><rect x="1145" y="8.5" width="3" height="1.2"/><rect x="1145" y="10.5" width="3" height="1.2"/><rect x="1145" y="12.5" width="3" height="1.2"/><rect x="1151" y="6.5" width="3" height="1.2"/><rect x="1151" y="8.5" width="3" height="1.2"/><rect x="1151" y="10.5" width="3" height="1.2"/><rect x="1151" y="12.5" width="3" height="1.2"/></g>
  <rect x="1174" y="10" width="6" height="2" fill="#fff"/>
  <rect x="1184" y="10" width="100" height="1" fill="#fff"/>
  <rect x="1234" y="8" width="1" height="5" fill="#fff"/>
  <rect x="1203" y="5" width="4" height="12" fill="#fff"/>
  <path d="M1288 11 H1296 M1292 7 V15" stroke="#fff" stroke-width="2"/>
  <rect x="1346.5" y="5.5" width="12" height="12" rx="0.5" fill="none" stroke="#eef" stroke-width="1.1"/>
  <path d="M1352.5 6 V9.5 M1352.5 13.5 V17 M1347 11.5 H1350.5 M1354.5 11.5 H1358 M1351.5 8 H1353.5 M1351.5 15 H1353.5 M1349 10.5 V12.5 M1356 10.5 V12.5" stroke="#eef" stroke-width="1.1"/>
</svg>
</body></html>
